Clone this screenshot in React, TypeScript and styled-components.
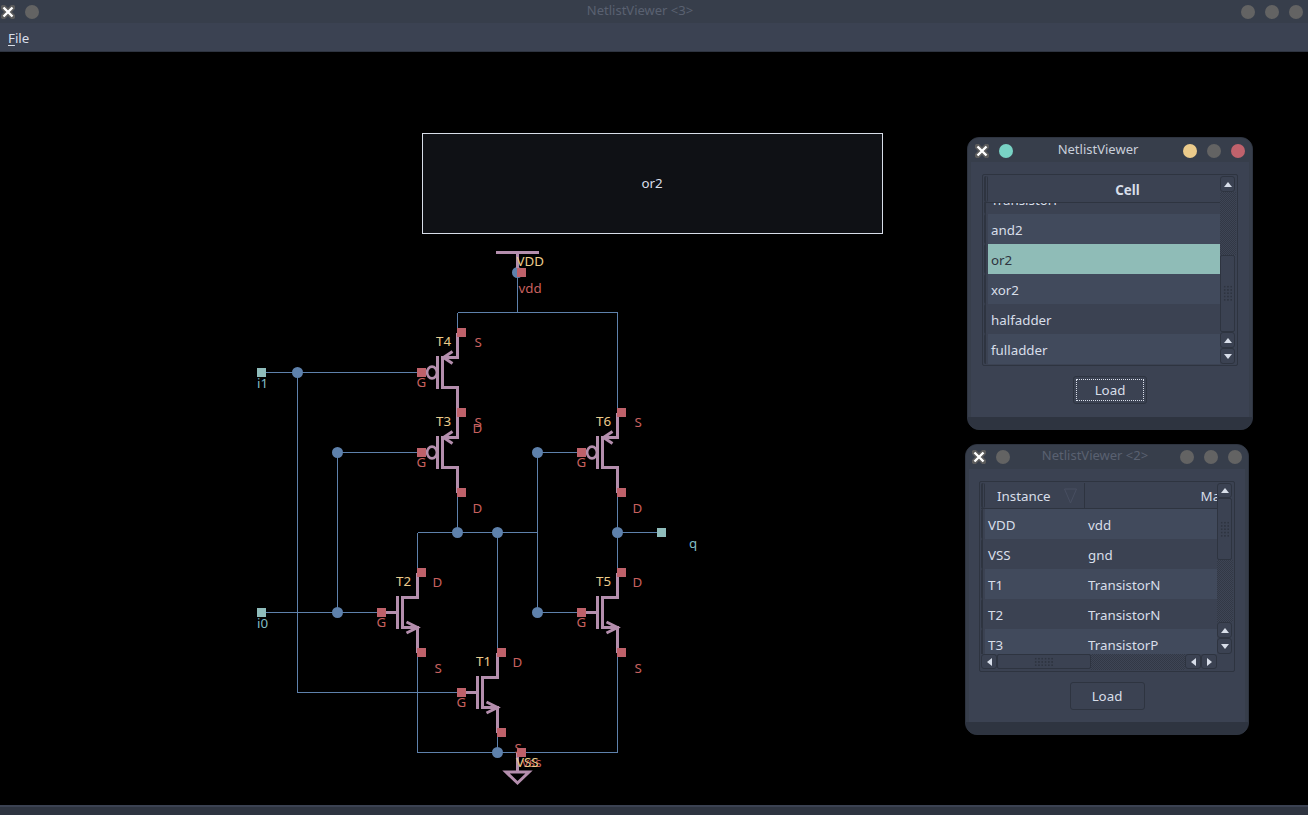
import React from "react";
import styled, { createGlobalStyle } from "styled-components";

const Global = createGlobalStyle`
  html, body { margin: 0; padding: 0; height: 100%; background: #000; overflow: hidden; }
  #root { height: 100%; }
  * { box-sizing: border-box; }
`;

const C = {
  dark: "#2e3440",
  bar: "#373e4b",
  base: "#3b4252",
  light: "#434c5e",
  text: "#d8dee9",
  select: "#8fbcb7",
  red: "#bf616a",
  label: "#c8615f",
  purple: "#b48ead",
  blue: "#5e81ac",
  green: "#8fbcbb",
  yellow: "#ebcb8b",
  cyan: "#80bcc4",
};

const Page = styled.div`
  width: 1308px;
  height: 815px;
  display: flex;
  flex-direction: column;
  font-family: "Noto Sans", sans-serif;
  font-size: 13.33px;
  color: ${C.text};
  background: #000;
`;

const TitleBar = styled.div<{ $h: number; $pl: number; $pr: number; $pt?: number }>`
  flex: none;
  height: ${(p) => p.$h}px;
  padding: ${(p) => p.$pt || 0}px ${(p) => p.$pr}px 0 ${(p) => p.$pl}px;
  display: flex;
  align-items: center;
  background: ${C.bar};
`;

const BtnGroup = styled.div`
  display: flex;
  gap: 10px;
  align-items: center;
`;

const Title = styled.div<{ $active?: boolean; $lift: number }>`
  flex: 1;
  text-align: center;
  font-size: 13px;
  padding-bottom: ${(p) => p.$lift}px;
  color: ${(p) => (p.$active ? "#c9cfda" : "#5a6171")};
`;

const Dot = styled.span<{ $color?: string }>`
  display: block;
  width: 14px;
  height: 14px;
  border-radius: 50%;
  background: ${(p) => p.$color || "#636363"};
`;

const CloseSvg = styled.svg`
  display: block;
  width: 14px;
  height: 14px;
`;

const CloseBtn = () => (
  <CloseSvg viewBox="0 0 14 14">
    <path d="M2.5 2.5L11.5 11.5M11.5 2.5L2.5 11.5" stroke="#5c5c5c" strokeWidth="5.5" strokeLinecap="round" fill="none" />
    <path d="M2.5 2.5L11.5 11.5M11.5 2.5L2.5 11.5" stroke="#fff" strokeWidth="2.4" fill="none" />
  </CloseSvg>
);

const MenuBar = styled.div`
  flex: none;
  height: 29px;
  padding: 1px 8px 0;
  display: flex;
  align-items: center;
  background: ${C.base};
  border-bottom: 1px solid ${C.dark};
`;

const MenuItem = styled.span`
  color: ${C.text};
  & > u { text-underline-offset: 2px; }
`;

const Desktop = styled.div`
  position: relative;
  flex: 1;
  min-height: 0;
  background: #000;
`;

const StatusBar = styled.div`
  flex: none;
  height: 10px;
  background: ${C.dark};
  border-top: 2px solid ${C.base};
`;

const Diagram = styled.svg`
  display: block;
  width: 1308px;
  height: 753px;
`;

const Label = styled.text<{ $color: string }>`
  font-family: "Noto Sans", sans-serif;
  font-size: 13.33px;
  fill: ${(p) => p.$color};
`;

const Win = styled.div<{ $x: number; $y: number; $w: number; $h: number }>`
  position: absolute;
  left: ${(p) => p.$x}px;
  top: ${(p) => p.$y}px;
  width: ${(p) => p.$w}px;
  height: ${(p) => p.$h}px;
  display: flex;
  flex-direction: column;
  border: 1px solid ${C.dark};
  border-radius: 12px;
  background: ${C.bar};
  overflow: hidden;
`;

const WinBody = styled.div<{ $gap: number; $pad: number }>`
  flex: 1;
  min-height: 0;
  margin: 0 3px;
  padding: 12px ${(p) => p.$pad}px 0;
  display: flex;
  flex-direction: column;
  align-items: center;
  gap: ${(p) => p.$gap}px;
  background: ${C.base};
`;

const WinFooter = styled.div`
  flex: none;
  height: 12px;
  background: ${C.dark};
`;

const Frame = styled.div<{ $h: number }>`
  flex: none;
  width: 256px;
  height: ${(p) => p.$h}px;
  padding: 1px;
  display: flex;
  flex-direction: column;
  border: 1px solid ${C.dark};
  border-radius: 2px;
`;

const FrameRow = styled.div`
  flex: 1;
  min-height: 0;
  display: flex;
`;

const Table = styled.div`
  flex: 1;
  min-width: 0;
  display: flex;
  flex-direction: column;
  overflow: hidden;
`;

const HeaderRow = styled.div<{ $h: number }>`
  flex: none;
  height: ${(p) => p.$h}px;
  display: flex;
  border-bottom: 1.5px solid ${C.dark};
  background: ${C.base};
`;

const Corner = styled.div`
  flex: none;
  width: 4px;
  border-left: 2px solid ${C.dark};
  border-right: 1px solid ${C.dark};
  border-radius: 2px;
`;

const Section = styled.div<{ $w?: number; $bold?: boolean; $align?: string; $pl?: number }>`
  position: relative;
  flex: ${(p) => (p.$w ? `0 0 ${p.$w}px` : "1")};
  display: flex;
  align-items: center;
  justify-content: ${(p) => p.$align || "center"};
  padding-left: ${(p) => p.$pl || 0}px;
  padding-top: ${(p) => (p.$bold ? 1 : 0)}px;
  font-weight: ${(p) => (p.$bold ? 700 : 400)};
  border-right: 1.5px solid ${C.dark};
`;

const SortArrow = styled.svg`
  position: absolute;
  right: 7px;
  top: 5px;
  width: 13px;
  height: 16px;
`;

const Viewport = styled.div`
  flex: 1;
  min-height: 0;
  overflow: hidden;
`;

const Row = styled.div<{ $offset?: number }>`
  display: flex;
  height: 30px;
  margin-top: ${(p) => p.$offset || 0}px;
`;

const RowHead = styled.div`
  flex: none;
  width: 4px;
  background: ${C.base};
  border-left: 2px solid ${C.dark};
  border-radius: 2px;
`;

const Cells = styled.div<{ $alt?: boolean; $selected?: boolean }>`
  flex: 1;
  display: flex;
  align-items: center;
  padding-top: 1px;
  background: ${(p) => (p.$selected ? C.select : p.$alt ? "#414a5c" : C.base)};
  color: ${(p) => (p.$selected ? C.dark : C.text)};
`;

const Cell = styled.div<{ $w?: number }>`
  flex: none;
  width: ${(p) => (p.$w ? `${p.$w}px` : "auto")};
  padding-left: 3px;
  white-space: nowrap;
`;

const VScroll = styled.div`
  flex: none;
  width: 16px;
  display: flex;
  flex-direction: column;
`;

const HScroll = styled.div`
  flex: none;
  height: 16px;
  display: flex;
`;

const ArrowBtn = styled.div<{ $size: number; $horizontal?: boolean }>`
  flex: none;
  width: ${(p) => (p.$horizontal ? p.$size : 15)}px;
  height: ${(p) => (p.$horizontal ? 15 : p.$size)}px;
  display: flex;
  align-items: center;
  justify-content: center;
  background: ${C.base};
  border: 1px solid ${C.dark};
  border-radius: 3px;
`;

const Arrow = styled.div<{ $dir: "up" | "down" | "left" | "right" }>`
  width: 0;
  height: 0;
  ${(p) =>
    p.$dir === "up"
      ? `border-left:4.5px solid transparent;border-right:4.5px solid transparent;border-bottom:5px solid ${C.text};`
      : p.$dir === "down"
      ? `border-left:4.5px solid transparent;border-right:4.5px solid transparent;border-top:5px solid ${C.text};`
      : p.$dir === "left"
      ? `border-top:4.5px solid transparent;border-bottom:4.5px solid transparent;border-right:5px solid ${C.text};`
      : `border-top:4.5px solid transparent;border-bottom:4.5px solid transparent;border-left:5px solid ${C.text};`}
`;

const Track = styled.div<{ $size?: number }>`
  ${(p) => (p.$size ? `flex: 0 0 ${p.$size}px;` : "flex: 1;")}
  background-color: ${C.base};
  background-image: repeating-conic-gradient(#323845 0 25%, #3e4555 0 50%);
  background-size: 2px 2px;
`;

const Thumb = styled.div<{ $size: number; $horizontal?: boolean }>`
  flex: 0 0 ${(p) => p.$size}px;
  ${(p) => (p.$horizontal ? "height: 15px;" : "width: 15px;")}
  display: flex;
  align-items: center;
  justify-content: center;
  background: ${C.base};
  border: 1px solid ${C.dark};
  border-radius: 2px;
`;

const Grip = styled.div<{ $w: number; $h: number }>`
  width: ${(p) => p.$w}px;
  height: ${(p) => p.$h}px;
  background-image: radial-gradient(circle, #2e3440 0.8px, transparent 0.9px);
  background-size: 3.3px 3.3px;
`;

const CornerBlock = styled.div`
  flex: none;
  width: 16px;
`;

const LoadButton = styled.button<{ $focus?: boolean; $w: number }>`
  position: relative;
  flex: none;
  width: ${(p) => p.$w}px;
  height: 28px;
  padding: 0;
  font: inherit;
  color: ${C.text};
  background: ${C.base};
  border: 1px solid ${C.dark};
  border-radius: 3px;
  ${(p) =>
    p.$focus
      ? `&::after { content: ""; position: absolute; inset: 2px; border: 1px dotted ${C.text}; }`
      : ""}
`;

type Tr = { n: string; gx: number; y: number; p: boolean };
const transistors: Tr[] = [
  { n: "T4", gx: 421.5, y: 372.5, p: true },
  { n: "T3", gx: 421.5, y: 452.5, p: true },
  { n: "T6", gx: 581.5, y: 452.5, p: true },
  { n: "T2", gx: 381.5, y: 612.5, p: false },
  { n: "T5", gx: 581.5, y: 612.5, p: false },
  { n: "T1", gx: 461.5, y: 692.5, p: false },
];

const wires = [
  "M261 372.5H421M297.5 372.5V692.5H461",
  "M337.5 452.5H421M337.5 452.5V612.5M261 612.5H381",
  "M517.5 272V312.5M457.5 312.5H617.5M457.5 312.5V332M617.5 312.5V412",
  "M457.5 492V532.5M417.5 532.5H537.5M617.5 492V572M617.5 532.5H661",
  "M537.5 452.5H581M537.5 452.5V612.5H581",
  "M417.5 532.5V572M417.5 652V752.5H617.5M617.5 652V752.5",
  "M497.5 532.5V652M497.5 732V752.5",
].join("");

const dots: [number, number][] = [
  [297.5, 372.5],
  [337.5, 452.5],
  [537.5, 452.5],
  [457.5, 532.5],
  [497.5, 532.5],
  [617.5, 532.5],
  [337.5, 612.5],
  [537.5, 612.5],
  [497.5, 752.5],
  [517.5, 272.5],
];

const terminals: [number, number][] = [
  [261.5, 372.5],
  [261.5, 612.5],
  [661.5, 532.5],
];

const Square = ({ x, y, color }: { x: number; y: number; color: string }) => (
  <rect x={x - 4.5} y={y - 4.5} width={9} height={9} fill={color} shapeRendering="crispEdges" />
);

const Symbol = ({ gx, y, p }: Tr) => {
  const stem = gx + 36;
  const ch = gx + 21;
  const body = `M${stem} ${y - 40}V${y - 15}H${ch}M${ch} ${y + 15}H${stem}V${y + 40}`;
  const arrow = p
    ? `M${ch + 10} ${y - 21}L${ch + 1} ${y - 15}L${ch + 10} ${y - 9}`
    : `M${stem - 11} ${y + 9.5}L${stem} ${y + 15}L${stem - 11} ${y + 20.5}`;
  return (
    <g fill="none" stroke={C.purple} strokeWidth={3}>
      <path d={`M${gx + 16} ${y - 16.5}V${y + 16.5}M${ch} ${y - 16.5}V${y + 16.5}`} shapeRendering="crispEdges" />
      <path d={body} shapeRendering="crispEdges" />
      <path d={arrow} />
      {p ? (
        <ellipse cx={gx + 10.5} cy={y} rx={4.9} ry={5.9} strokeWidth={2.6} />
      ) : (
        <path d={`M${gx} ${y}H${gx + 16}`} shapeRendering="crispEdges" />
      )}
    </g>
  );
};

const Schematic = () => (
  <Diagram viewBox="0 52 1308 753">
    <rect x={422.5} y={133.5} width={460} height={100} fill="#0f1115" stroke={C.text} shapeRendering="crispEdges" />
    <Label $color={C.text} x={652} y={188} textAnchor="middle">or2</Label>
    <path d={wires} fill="none" stroke={C.blue} shapeRendering="crispEdges" />
    {dots.map(([x, y]) => (
      <circle key={`${x}-${y}`} cx={x} cy={y} r={5.5} fill={C.blue} />
    ))}
    <path d="M496 252.5H539M517.5 252V268" fill="none" stroke={C.purple} strokeWidth={3} shapeRendering="crispEdges" />
    <path d="M517.5 752V771.5M506 772H529L517.5 783Z" fill="none" stroke={C.purple} strokeWidth={3} />
    {transistors.map((t) => (
      <Symbol key={t.n} {...t} />
    ))}
    {transistors.map((t) => (
      <g key={t.n}>
        <Label $color={C.yellow} x={t.gx + 14.5} y={t.y - 26.5}>{t.n}</Label>
        <Label $color={C.label} x={t.gx - 5} y={t.y + 14}>G</Label>
        <Label $color={C.label} x={t.gx + (t.p ? 53 : 51)} y={t.y - 25.5}>{t.p ? "S" : "D"}</Label>
        <Label $color={C.label} x={t.gx + (t.p ? 51 : 53)} y={t.y + 60}>{t.p ? "D" : "S"}</Label>
      </g>
    ))}
    {transistors.map((t) => (
      <g key={t.n}>
        <Square x={t.gx} y={t.y} color={C.red} />
        <Square x={t.gx + 40} y={t.y - 40} color={C.red} />
        <Square x={t.gx + 40} y={t.y + 40} color={C.red} />
      </g>
    ))}
    <Square x={521.5} y={272.5} color={C.red} />
    <Square x={521.5} y={752.5} color={C.red} />
    {terminals.map(([x, y]) => (
      <Square key={`${x}-${y}`} x={x} y={y} color={C.green} />
    ))}
    <Label $color={C.cyan} x={257} y={388}>i1</Label>
    <Label $color={C.cyan} x={257} y={628}>i0</Label>
    <Label $color={C.cyan} x={689} y={548}>q</Label>
    <Label $color={C.yellow} x={516.5} y={266}>VDD</Label>
    <Label $color={C.label} x={518.5} y={293}>vdd</Label>
    <Label $color={C.label} x={522} y={767}>vss</Label>
    <Label $color={C.yellow} x={516} y={767}>VSS</Label>
  </Diagram>
);

const cellRows = [
  { n: "TransistorP", alt: false },
  { n: "and2", alt: true },
  { n: "or2", alt: false, selected: true },
  { n: "xor2", alt: true },
  { n: "halfadder", alt: false },
  { n: "fulladder", alt: true },
];

const instanceRows = [
  ["VDD", "vdd"],
  ["VSS", "gnd"],
  ["T1", "TransistorN"],
  ["T2", "TransistorN"],
  ["T3", "TransistorP"],
];

export default function App() {
  return (
    <Page>
      <Global />
      <TitleBar $h={23} $pl={1} $pr={5}>
        <BtnGroup>
          <CloseBtn />
          <Dot />
        </BtnGroup>
        <Title $lift={3}>NetlistViewer &lt;3&gt;</Title>
        <BtnGroup>
          <Dot />
          <Dot />
          <Dot />
        </BtnGroup>
      </TitleBar>
      <MenuBar>
        <MenuItem>
          <u>F</u>ile
        </MenuItem>
      </MenuBar>
      <Desktop>
        <Schematic />

        <Win $x={967} $y={85} $w={286} $h={293}>
          <TitleBar $h={24} $pl={7} $pr={7} $pt={2}>
            <BtnGroup>
              <CloseBtn />
              <Dot $color="#79d3c5" />
            </BtnGroup>
            <Title $active $lift={4}>NetlistViewer</Title>
            <BtnGroup>
              <Dot $color="#ebcb8b" />
              <Dot />
              <Dot $color="#c0626c" />
            </BtnGroup>
          </TitleBar>
          <WinBody $gap={10} $pad={11}>
            <Frame $h={192}>
              <FrameRow>
                <Table>
                  <HeaderRow $h={27}>
                    <Corner />
                    <Section $bold $w={280}>Cell</Section>
                  </HeaderRow>
                  <Viewport>
                    {cellRows.map((r, i) => (
                      <Row key={r.n} $offset={i === 0 ? -19 : 0}>
                        <RowHead />
                        <Cells $alt={r.alt} $selected={r.selected}>
                          <Cell>{r.n}</Cell>
                        </Cells>
                      </Row>
                    ))}
                  </Viewport>
                </Table>
                <VScroll>
                  <ArrowBtn $size={16}><Arrow $dir="up" /></ArrowBtn>
                  <Track $size={63} />
                  <Thumb $size={77}><Grip $w={10} $h={17} /></Thumb>
                  <ArrowBtn $size={16}><Arrow $dir="up" /></ArrowBtn>
                  <ArrowBtn $size={16}><Arrow $dir="down" /></ArrowBtn>
                </VScroll>
              </FrameRow>
            </Frame>
            <LoadButton $focus $w={74}>Load</LoadButton>
          </WinBody>
          <WinFooter />
        </Win>

        <Win $x={965} $y={392} $w={284} $h={291}>
          <TitleBar $h={24} $pl={6} $pr={6}>
            <BtnGroup>
              <CloseBtn />
              <Dot />
            </BtnGroup>
            <Title $lift={5}>NetlistViewer &lt;2&gt;</Title>
            <BtnGroup>
              <Dot />
              <Dot />
              <Dot />
            </BtnGroup>
          </TitleBar>
          <WinBody $gap={10} $pad={10}>
            <Frame $h={191}>
              <FrameRow>
                <Table>
                  <HeaderRow $h={26}>
                    <Corner />
                    <Section $w={100} $align="flex-start" $pl={12}>
                      Instance
                      <SortArrow viewBox="0 0 13 16">
                        <path d="M0.5 1H12.5L6.5 15Z" fill="none" stroke="#484f61" />
                      </SortArrow>
                    </Section>
                    <Section $w={276}>Master</Section>
                  </HeaderRow>
                  <Viewport>
                    {instanceRows.map((r, i) => (
                      <Row key={r[0]}>
                        <RowHead />
                        <Cells $alt={i % 2 === 0}>
                          <Cell $w={100}>{r[0]}</Cell>
                          <Cell>{r[1]}</Cell>
                        </Cells>
                      </Row>
                    ))}
                  </Viewport>
                </Table>
                <VScroll>
                  <ArrowBtn $size={15}><Arrow $dir="up" /></ArrowBtn>
                  <Thumb $size={62}><Grip $w={10} $h={17} /></Thumb>
                  <Track $size={62} />
                  <ArrowBtn $size={16}><Arrow $dir="up" /></ArrowBtn>
                  <ArrowBtn $size={16}><Arrow $dir="down" /></ArrowBtn>
                </VScroll>
              </FrameRow>
              <HScroll>
                <ArrowBtn $size={16} $horizontal><Arrow $dir="left" /></ArrowBtn>
                <Thumb $size={94} $horizontal><Grip $w={20} $h={10} /></Thumb>
                <Track />
                <ArrowBtn $size={16} $horizontal><Arrow $dir="left" /></ArrowBtn>
                <ArrowBtn $size={16} $horizontal><Arrow $dir="right" /></ArrowBtn>
                <CornerBlock />
              </HScroll>
            </Frame>
            <LoadButton $w={75}>Load</LoadButton>
          </WinBody>
          <WinFooter />
        </Win>
      </Desktop>
      <StatusBar />
    </Page>
  );
}
